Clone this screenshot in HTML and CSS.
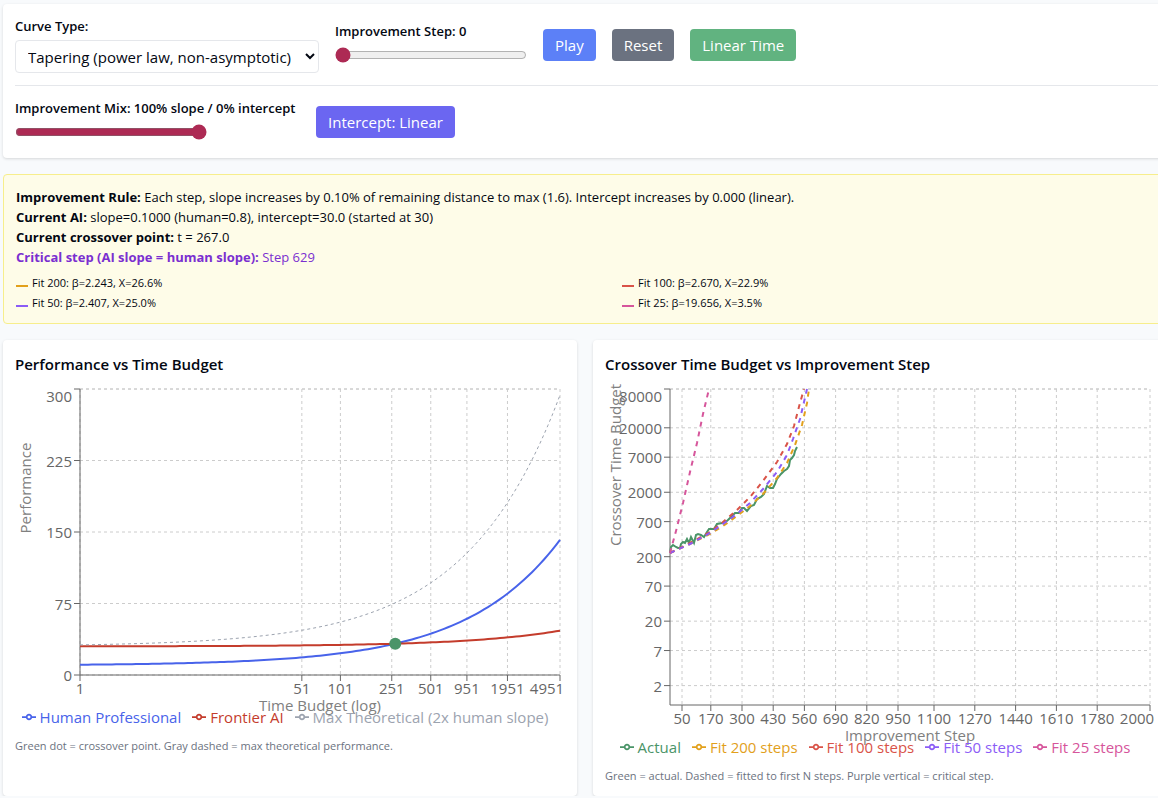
FILE: index.html
```html
<!DOCTYPE html>
<html lang="en">
  <head>
    <meta charset="UTF-8" />
    <meta name="viewport" content="width=device-width, initial-scale=1.0" />
    <title>Crossover Time Budget</title>
    <link rel="stylesheet" href="styles.css">
  </head>
  <body>
    <main class="app">
      <!-- Controls -->
      <section class="card">
        <div class="row">
          <div class="field">
            <label for="curve-type">Curve Type:</label>
            <select id="curve-type">
              <option>Tapering (power law, non-asymptotic)</option>
              <option>Linear</option>
            </select>
          </div>
          <div class="slider">
            <label for="step">Improvement Step: 0</label>
            <input type="range" id="step" min="0" max="2000" value="0" />
          </div>
          <button type="button" class="play">Play</button>
          <button type="button" class="reset">Reset</button>
          <button type="button" class="time">Linear Time</button>
        </div>
        <div class="row row-mix">
          <div class="slider">
            <label for="mix">Improvement Mix: 100% slope / 0% intercept</label>
            <input type="range" id="mix" min="0" max="100" value="100" />
          </div>
          <button type="button" class="intercept">Intercept: Linear</button>
        </div>
      </section>

      <!-- Current state -->
      <section class="info">
        <p><strong>Improvement Rule:</strong> Each step, slope increases by 0.10% of remaining distance to max (1.6). Intercept increases by 0.000 (linear).</p>
        <p><strong>Current AI:</strong> slope=0.1000 (human=0.8), intercept=30.0 (started at 30)</p>
        <p><strong>Current crossover point:</strong> t = 267.0</p>
        <p class="critical"><strong>Critical step (AI slope = human slope):</strong> Step 629</p>
        <ul class="fits">
          <li class="fit-200">Fit 200: β=2.243, X=26.6%</li>
          <li class="fit-100">Fit 100: β=2.670, X=22.9%</li>
          <li class="fit-50">Fit 50: β=2.407, X=25.0%</li>
          <li class="fit-25">Fit 25: β=19.656, X=3.5%</li>
        </ul>
      </section>

      <!-- Charts -->
      <div class="charts">
        <section class="card">
          <h2>Performance vs Time Budget</h2>
          <svg class="chart" id="performance" viewBox="0 0 550 321"></svg>
          <ul class="legend">
            <li class="human">Human Professional</li>
            <li class="frontier">Frontier AI</li>
            <li class="max">Max Theoretical (2x human slope)</li>
          </ul>
          <p class="note">Green dot = crossover point. Gray dashed = max theoretical performance.</p>
        </section>
        <section class="card">
          <h2>Crossover Time Budget vs Improvement Step</h2>
          <svg class="chart" id="crossover" viewBox="0 0 550 351"></svg>
          <ul class="legend">
            <li class="actual">Actual</li>
            <li class="fit-200">Fit 200 steps</li>
            <li class="fit-100">Fit 100 steps</li>
            <li class="fit-50">Fit 50 steps</li>
            <li class="fit-25">Fit 25 steps</li>
          </ul>
          <p class="note">Green = actual. Dashed = fitted to first N steps. Purple vertical = critical step.</p>
        </section>
      </div>
    </main>
    <script src="charts.js"></script>
  </body>
</html>
```
FILE: styles.css
```css
:root {
  --human: #4863ea;
  --frontier: #c43c2c;
  --max: #9ca3af;
  --actual: #4a9468;
  --fit-200: #e2a01b;
  --fit-100: #d95348;
  --fit-50: #8b5cf6;
  --fit-25: #d6559b;
}

* {
  box-sizing: border-box;
  margin: 0;
  padding: 0;
}

body {
  font-family: "Open Sans", "Noto Sans", sans-serif;
  font-size: 15px;
  line-height: 24px;
  color: #030712;
  background: #f8fafc;
  overflow-x: hidden;
}

ul {
  list-style: none;
}

/* the board runs past the right edge of the window */
.app {
  display: flex;
  flex-direction: column;
  gap: 16px;
  margin: 4px -75px 0 3px;
}

.card {
  padding: 12px;
  background: #fff;
  border-radius: 4px;
  box-shadow: 0 1px 3px rgba(0, 0, 0, 0.14);
}

/* Controls */
.row {
  display: flex;
  align-items: center;
  gap: 16px;
}

.row-mix {
  margin-top: 12px;
  padding-top: 12px;
  border-top: 1px solid #e5e7eb;
}

label {
  display: block;
  font-size: 13px;
  font-weight: 600;
  line-height: 20px;
}

select {
  display: block;
  width: 304px;
  height: 33px;
  margin-top: 4px;
  padding: 0 8px;
  font: inherit;
  color: inherit;
  background: #fff;
  border: 1px solid #e5e7eb;
  border-radius: 4px;
}

.slider {
  height: 48px;
}

.row-mix .slider {
  min-width: 285px;
}

input[type="range"] {
  display: block;
  width: 192px;
  height: 16px;
  margin-top: 6px;
  accent-color: #ad2a54;
}

button {
  height: 32px;
  padding: 0 12px;
  font: inherit;
  color: #fff;
  border: none;
  border-radius: 4px;
  cursor: pointer;
}

.play {
  background: #5c80f7;
}

.reset {
  background: #6b7280;
}

.time {
  background: #61b380;
}

.intercept {
  background: #6b66f1;
}

/* Current state */
.info {
  padding: 12px;
  font-size: 13px;
  line-height: 20px;
  background: #fefce8;
  border: 1px solid #f7ee8c;
  border-radius: 4px;
}

.critical {
  color: #7a2fd0;
}

.fits {
  display: grid;
  grid-template-columns: 1fr 1fr;
  gap: 4px 8px;
  margin-top: 8px;
  font-size: 11px;
  line-height: 16px;
}

.fits li::before {
  content: "";
  display: inline-block;
  width: 12px;
  height: 2px;
  margin-right: 4px;
  background: var(--color);
}

.human { --color: var(--human); }
.frontier { --color: var(--frontier); }
.max { --color: var(--max); }
.actual { --color: var(--actual); }
.fit-200 { --color: var(--fit-200); }
.fit-100 { --color: var(--fit-100); }
.fit-50 { --color: var(--fit-50); }
.fit-25 { --color: var(--fit-25); }

/* Charts */
.charts {
  display: grid;
  grid-template-columns: 1fr 1fr;
  gap: 16px;
  margin-right: 66px;
}

h2 {
  margin-bottom: 8px;
  font-size: 15px;
  font-weight: 600;
  line-height: 24px;
}

.chart {
  display: block;
  width: 100%;
  overflow: visible;
}

.chart text {
  font-size: 15px;
  fill: #666;
}

.chart .title {
  fill: #808080;
}

.grid {
  stroke: #ccc;
  stroke-dasharray: 3 3;
}

.axis {
  stroke: #666;
}

.line {
  fill: none;
  stroke: var(--color);
  stroke-width: 2;
}

.line.max {
  stroke-width: 1;
  stroke-dasharray: 3 3;
}

.line.dashed {
  stroke-dasharray: 5 5;
}

.dot {
  fill: var(--actual);
}

.legend {
  display: flex;
  justify-content: center;
  gap: 11px;
  padding: 0 10px 5px 0;
  white-space: nowrap;
}

.legend li {
  display: flex;
  align-items: center;
  gap: 4px;
  color: var(--color);
}

.legend svg {
  width: 14px;
  height: 14px;
  fill: none;
  stroke: currentColor;
  stroke-width: 4;
}

.note {
  margin-top: 4px;
  font-size: 11px;
  line-height: 16px;
  color: #6b7280;
}
```
FILE: charts.js
```js
const LEFT = 65;
const RIGHT = 545;
const TOP = 5;

function add(svg, tag, attrs, text) {
  const el = document.createElementNS("http://www.w3.org/2000/svg", tag);
  for (const key in attrs) el.setAttribute(key, attrs[key]);
  if (text !== undefined) el.textContent = text;
  svg.appendChild(el);
}

function rule(svg, cls, x1, y1, x2, y2) {
  add(svg, "line", { class: cls, x1, y1, x2, y2 });
}

// ticks are [label, position, label position if it has to be moved inwards]
function drawAxes(svg, bottom, xTicks, yTicks) {
  rule(svg, "grid", LEFT, TOP, RIGHT, TOP);
  yTicks.forEach(([, y]) => rule(svg, "grid", LEFT, y, RIGHT, y));
  xTicks.forEach(([, x]) => rule(svg, "grid", x, TOP, x, bottom));
  rule(svg, "axis", LEFT, bottom, RIGHT, bottom);
  rule(svg, "axis", LEFT, TOP, LEFT, bottom);
  xTicks.forEach(([label, x, textX]) => {
    rule(svg, "axis", x, bottom, x, bottom + 6);
    add(svg, "text", { x: textX || x, y: bottom + 19, "text-anchor": "middle" }, label);
  });
  yTicks.forEach(([label, y, textY]) => {
    rule(svg, "axis", LEFT - 6, y, LEFT, y);
    add(svg, "text", { x: LEFT - 8, y: (textY || y) + 6, "text-anchor": "end" }, label);
  });
}

function drawTitles(svg, bottom, xTitle, yTitle, yMiddle) {
  add(svg, "text", { class: "title", x: 305, y: bottom + 36, "text-anchor": "middle" }, xTitle);
  add(svg, "text", {
    class: "title",
    transform: `translate(16 ${yMiddle}) rotate(-90)`,
    "text-anchor": "middle",
  }, yTitle);
}

function drawLine(svg, cls, points) {
  add(svg, "polyline", { class: "line " + cls, points: points.join(" ") });
}

// Performance = intercept + slope * t^0.6
const perf = document.getElementById("performance");
const perfBottom = 291;
const perfX = (t) => LEFT + (480 * Math.log(t)) / Math.log(4951);
const perfY = (v) => perfBottom - (286 * v) / 300;

function curve(intercept, slope) {
  const points = [];
  for (let i = 0; i <= 120; i++) {
    const t = Math.pow(4951, i / 120);
    points.push([perfX(t), perfY(intercept + slope * Math.pow(t, 0.6))]);
  }
  return points;
}

drawAxes(
  perf,
  perfBottom,
  [1, 51, 101, 251, 501, 951, 1951, 4951].map((t) => [t, perfX(t), t === 4951 ? 532 : 0]),
  [0, 75, 150, 225, 300].map((v) => [v, perfY(v), v === 300 ? 12 : 0])
);
drawLine(perf, "human", curve(10, 0.8));
drawLine(perf, "frontier", curve(30, 0.1));
drawLine(perf, "max", curve(30, 1.6));
add(perf, "circle", { class: "dot", cx: perfX(267), cy: perfY(32.9), r: 6 });
drawTitles(perf, perfBottom, "Time Budget (log)", "Performance", 104);

// Crossover time, log scale from 1 to 80000
const cross = document.getElementById("crossover");
const crossBottom = 321;
const crossX = (step) => LEFT + (480 * step) / 2000;
const crossY = (t) => crossBottom - (316 * Math.log(t)) / Math.log(80000);

drawAxes(
  cross,
  crossBottom,
  [50, 170, 300, 430, 560, 690, 820, 950, 1100, 1270, 1440, 1610, 1780, 2000]
    .map((s) => [s, crossX(s), s === 2000 ? 532 : 0]),
  [2, 7, 20, 70, 200, 700, 2000, 7000, 20000, 80000]
    .map((t) => [t, crossY(t), t === 80000 ? 12 : 0])
);

// Points on the plot
drawLine(cross, "actual", [
  [65, 169], [66, 163], [68, 161], [71, 163], [73, 164], [75, 164], [76, 160], [78, 158],
  [80, 159], [82, 155], [84, 159], [86, 153], [87, 155], [89, 159], [91, 151], [93, 150],
  [96, 151], [99, 153], [102, 148], [104, 145], [109, 145], [112, 140], [117, 139], [122, 137],
  [125, 134], [130, 129], [134, 129], [137, 124], [139, 124], [142, 127], [146, 122],
  [149, 121], [152, 115], [156, 113], [159, 110], [162, 102], [165, 104], [168, 104],
  [170, 100], [172, 95], [176, 90], [179, 87], [182, 85], [184, 82], [185, 76], [187, 74],
  [189, 71], [190, 67], [192, 63],
]);
drawLine(cross, "fit-200 dashed", [
  [65, 169], [85, 160], [105, 150], [118, 142], [132, 132], [145, 122], [158, 110],
  [172, 94], [182, 79], [190, 61], [197, 41], [202, 19], [204, 5],
]);
drawLine(cross, "fit-100 dashed", [
  [65, 169], [85, 159], [105, 148], [118, 138], [132, 126], [145, 113], [158, 97],
  [172, 78], [182, 60], [189, 42], [195, 19], [199, 5],
]);
drawLine(cross, "fit-50 dashed", [
  [65, 169], [85, 160], [105, 149], [118, 140], [132, 130], [145, 119], [158, 105],
  [172, 88], [182, 71], [188, 55], [195, 35], [199, 18], [202, 5],
]);
drawLine(cross, "fit-25 dashed", [
  [65, 169], [71, 147], [78, 119], [85, 88], [92, 59], [98, 30], [104, 5],
]);
drawTitles(cross, crossBottom, "Improvement Step", "Crossover Time Budget", 81);

// Legend markers
document.querySelectorAll(".legend li").forEach((item) => {
  item.insertAdjacentHTML(
    "afterbegin",
    '<svg viewBox="0 0 32 32"><path d="M0,16H10.67A5.33,5.33,0,1,1,21.33,16H32M21.33,16A5.33,5.33,0,1,1,10.67,16" /></svg>'
  );
});
```
